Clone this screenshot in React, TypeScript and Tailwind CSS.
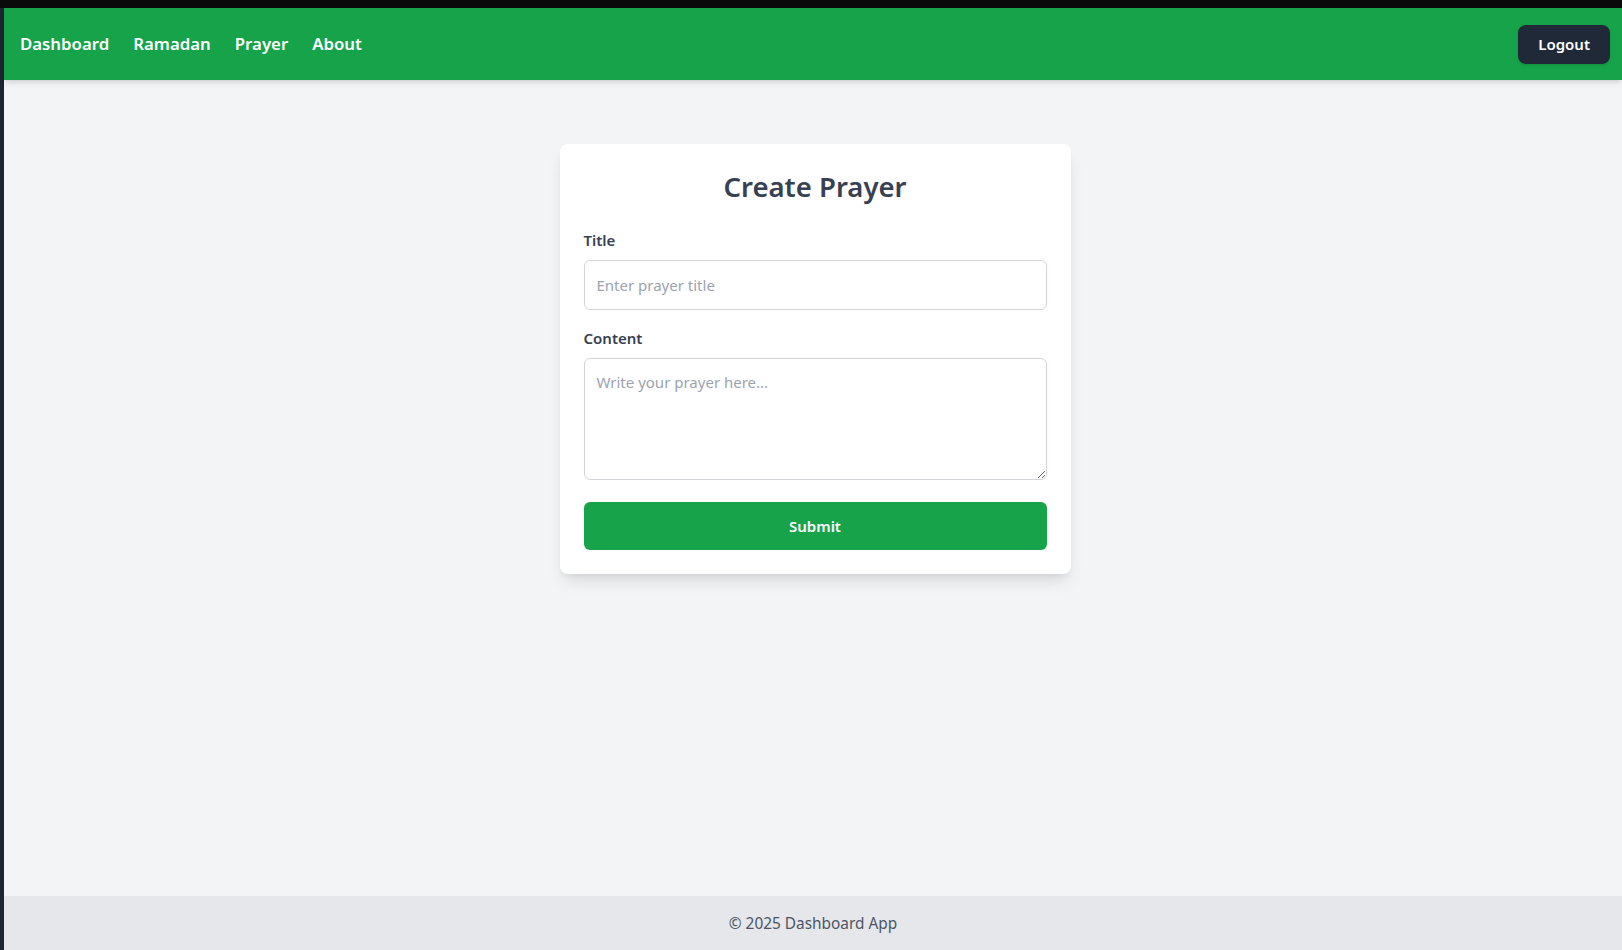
import { useState } from "react";

const NAV_LINKS = ["Dashboard", "Ramadan", "Prayer", "About"];

export default function App() {
  const [title, setTitle] = useState("");
  const [content, setContent] = useState("");

  return (
    <div className="flex min-h-screen flex-col bg-[#0a0a0a] font-['Noto_Sans',sans-serif]">
      <div className="h-[8px] shrink-0 bg-[#0a0a0a]" />
      <div className="flex flex-1">
        <div className="w-[4px] shrink-0 bg-[#1e2430]" />
        <div className="flex flex-1 flex-col bg-[#f3f4f6]">
          <nav className="flex h-[72px] items-center justify-between bg-[#16a34a] pl-4 pr-3 shadow-md">
            <div className="flex items-center gap-6">
              {NAV_LINKS.map((link) => (
                <a key={link} href="#" className="text-[16.8px] font-semibold text-white">
                  {link}
                </a>
              ))}
            </div>
            <button className="h-[39px] rounded-lg bg-[#1f2937] px-5 text-[15px] font-semibold text-white shadow">
              Logout
            </button>
          </nav>

          <main className="flex flex-1 justify-center pl-[4px] pt-[64px]">
            <form
              className="h-fit w-[511px] rounded-lg bg-white p-6 shadow-lg"
              onSubmit={(e) => e.preventDefault()}
            >
              <h1 className="mb-[22px] text-center text-[27.5px] leading-[38px] font-semibold text-[#374151]">
                Create Prayer
              </h1>

              <label className="mb-2 block text-[15px] leading-6 font-semibold text-[#374151]">Title</label>
              <input
                value={title}
                onChange={(e) => setTitle(e.target.value)}
                placeholder="Enter prayer title"
                className="mb-4 block h-[50px] w-full rounded-md border border-[#d1d5db] px-3 text-[15px] text-[#374151] outline-none placeholder:text-[#9ca3af]"
              />

              <label className="mb-2 block text-[15px] leading-6 font-semibold text-[#374151]">Content</label>
              <textarea
                value={content}
                onChange={(e) => setContent(e.target.value)}
                placeholder="Write your prayer here..."
                className="mb-[22px] block h-[122px] w-full rounded-md border border-[#d1d5db] px-3 py-3 text-[15px] text-[#374151] outline-none placeholder:text-[#9ca3af]"
              />

              <button
                type="submit"
                className="block h-[48px] w-full rounded-md bg-[#16a34a] text-[15px] font-semibold text-white"
              >
                Submit
              </button>
            </form>
          </main>

          <footer className="flex h-[54px] items-center justify-center bg-[#e5e7eb] pt-[2px] text-[15.4px] text-[#4b5563]">
            © 2025 Dashboard App
          </footer>
        </div>
      </div>
    </div>
  );
}
